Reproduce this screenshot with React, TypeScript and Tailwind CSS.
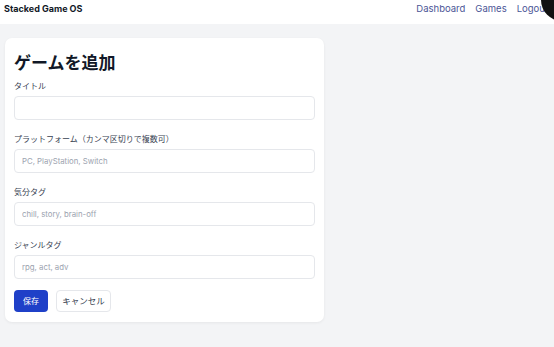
import React from 'react';

const font = { fontFamily: 'Inter, "Noto Sans CJK JP", sans-serif' };

const Field: React.FC<{ label: string; placeholder?: string; last?: boolean }> = ({ label, placeholder, last }) => (
  <div className={last ? 'mb-[11px]' : 'mb-[13px]'}>
    <label className="block text-[8px] leading-[12px] text-[#374151] mb-[4px]">{label}</label>
    <input
      placeholder={placeholder}
      className="block w-full h-[24px] rounded-[4px] border border-[#e5e7eb] bg-white px-[7px] text-[7.8px] placeholder:text-[#9ca3af] outline-none"
    />
  </div>
);

export default function App() {
  return (
    <div className="relative w-[554px] h-[347px] overflow-hidden bg-[#f3f4f6]" style={font}>
      <header className="h-[24px] bg-white flex items-start justify-between pl-[4px] pr-[6px] pt-[2px]">
        <span className="text-[9px] leading-[13px] font-bold text-[#111827]">Stacked Game OS</span>
        <nav className="flex gap-[10px] text-[9.5px] leading-[13px] text-[#4b5696]">
          <a>Dashboard</a>
          <a>Games</a>
          <a>Logout</a>
        </nav>
      </header>

      <main className="pt-[14px] pl-[5px]">
        <div className="w-[319px] rounded-[7px] bg-white shadow-[0_1px_3px_rgba(0,0,0,0.06)] pt-[13px] pb-[10px] px-[9px]">
          <h1 className="text-[17px] leading-[24px] font-bold text-[#111827] mb-[5px]">ゲームを追加</h1>
          <Field label="タイトル" />
          <Field label="プラットフォーム（カンマ区切りで複数可）" placeholder="PC, PlayStation, Switch" />
          <Field label="気分タグ" placeholder="chill, story, brain-off" />
          <Field label="ジャンルタグ" placeholder="rpg, act, adv" last />
          <div className="flex gap-[8px]">
            <button className="h-[22px] w-[34px] rounded-[4px] bg-[#1f40c8] text-white text-[8px]">保存</button>
            <button className="h-[22px] w-[55px] rounded-[4px] border border-[#e5e7eb] bg-white text-[#374151] text-[8.5px]">キャンセル</button>
          </div>
        </div>
      </main>

      <div className="absolute left-[541px] top-[-21px] w-[42px] h-[42px] rounded-full bg-[#111]" />
    </div>
  );
}
